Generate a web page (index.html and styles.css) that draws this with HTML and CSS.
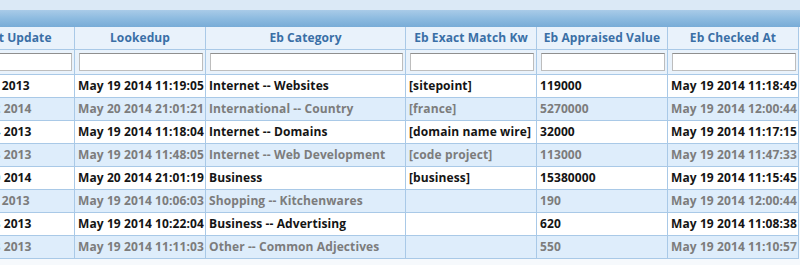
FILE: index.html
```html
<!DOCTYPE html>
<html>
<head>
<meta charset="utf-8">
<link rel="stylesheet" href="styles.css">
</head>
<body>
<div class="page">
  <div class="band"></div>
  <div class="bar"></div>
  <div class="clip">
    <table class="grid">
      <colgroup>
        <col class="c-first"><col class="c-look"><col class="c-cat"><col class="c-kw"><col class="c-val"><col class="c-chk">
      </colgroup>
      <thead>
        <tr class="head">
          <th>Last Update</th><th>Lookedup</th><th>Eb Category</th><th>Eb Exact Match Kw</th><th>Eb Appraised Value</th><th>Eb Checked At</th>
        </tr>
        <tr class="filter">
          <td><input type="text"></td><td><input type="text"></td><td><input type="text"></td><td><input type="text"></td><td><input type="text"></td><td><input type="text"></td>
        </tr>
      </thead>
      <tbody>
        <tr class="odd"><td>Dec 10 2013</td><td>May 19 2014 11:19:05</td><td>Internet -- Websites</td><td>[sitepoint]</td><td>119000</td><td>May 19 2014 11:18:49</td></tr>
        <tr class="even"><td>Mar 12 2014</td><td>May 20 2014 21:01:21</td><td>International -- Country</td><td>[france]</td><td>5270000</td><td>May 19 2014 12:00:44</td></tr>
        <tr class="odd"><td>Nov 14 2013</td><td>May 19 2014 11:18:04</td><td>Internet -- Domains</td><td>[domain name wire]</td><td>32000</td><td>May 19 2014 11:17:15</td></tr>
        <tr class="even"><td>Nov 18 2013</td><td>May 19 2014 11:48:05</td><td>Internet -- Web Development</td><td>[code project]</td><td>113000</td><td>May 19 2014 11:47:33</td></tr>
        <tr class="odd"><td>Mar 10 2014</td><td>May 20 2014 21:01:19</td><td>Business</td><td>[business]</td><td>15380000</td><td>May 19 2014 11:15:45</td></tr>
        <tr class="even"><td>Dec 12 2013</td><td>May 19 2014 10:06:03</td><td>Shopping -- Kitchenwares</td><td></td><td>190</td><td>May 19 2014 12:00:44</td></tr>
        <tr class="odd"><td>Nov 28 2013</td><td>May 19 2014 10:22:04</td><td>Business -- Advertising</td><td></td><td>620</td><td>May 19 2014 11:08:38</td></tr>
        <tr class="even"><td>Nov 28 2013</td><td>May 19 2014 11:11:03</td><td>Other -- Common Adjectives</td><td></td><td>550</td><td>May 19 2014 11:10:57</td></tr>
      </tbody>
    </table>
  </div>
</div>
</body>
</html>
```
FILE: styles.css
```css
html, body {
  margin: 0;
  padding: 0;
  background: #f6f9fc;
}
.page {
  width: 800px;
  height: 265px;
  overflow: hidden;
  font-family: "Open Sans", "Lucida Grande", sans-serif;
  font-size: 12px;
  font-weight: bold;
}
.band {
  height: 10px;
  background: #dbe9f6;
}
.bar {
  height: 17px;
  background: linear-gradient(to bottom, #a9cbe8 0%, #8dbbe0 50%, #78acd7 100%);
}
.clip {
  width: 800px;
  overflow: hidden;
}
.grid {
  border-collapse: collapse;
  table-layout: fixed;
  width: 843px;
  margin-left: -45px;
}
.c-first { width: 119px; }
.c-look { width: 131px; }
.c-cat { width: 200px; }
.c-kw { width: 131px; }
.c-val { width: 131px; }
.c-chk { width: 131px; }
.grid th, .grid td {
  border: 1px solid #a9c9e7;
  padding: 0 0 0 3px;
  white-space: nowrap;
  overflow: hidden;
  text-align: left;
  line-height: 16px;
  letter-spacing: 0.1px;
}
.grid tr.head th {
  height: 22px;
  background: #e9f2fb;
  color: #3a6fa6;
  text-align: center;
  padding: 0;
  border-top: none;
}
.grid tr.filter td {
  height: 24px;
  background: #e9f2fb;
  padding: 0 2px 0 4px;
}
.filter input {
  display: block;
  box-sizing: border-box;
  width: 100%;
  height: 18px;
  margin: 0;
  padding: 0;
  background: #fff;
  border: 1px solid #bdbdbd;
  border-top-color: #8f8f8f;
}
.grid tbody td {
  height: 22px;
}
.grid tr.odd td {
  background: #fff;
  color: #141414;
}
.grid tr.even td {
  background: #deedfb;
  color: #7c7c7c;
}
```
